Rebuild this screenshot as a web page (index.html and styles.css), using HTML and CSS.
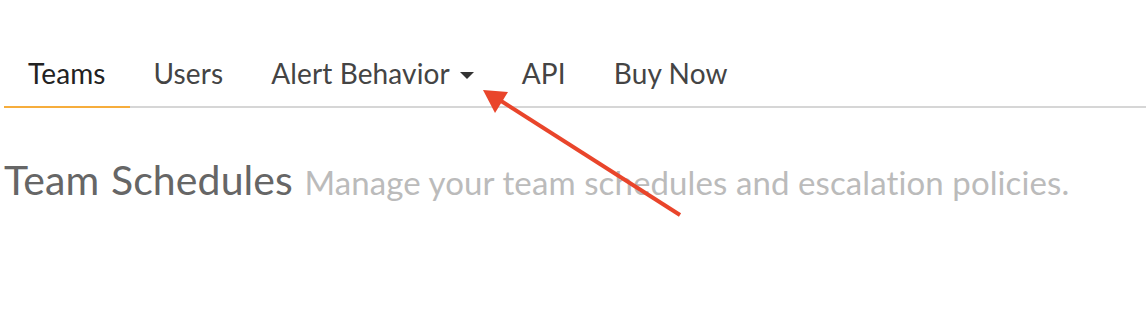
FILE: index.html
```html
<!DOCTYPE html>
<html lang="en">
<head>
  <meta charset="UTF-8" />
  <title>Team Schedules</title>
  <link rel="stylesheet" href="styles.css">
</head>
<body>
  <div class="page">
    <ul class="tabs">
      <li class="tab active">Teams</li>
      <li class="tab">Users</li>
      <li class="tab">Alert Behavior <span class="caret"></span></li>
      <li class="tab">API</li>
      <li class="tab">Buy Now</li>
    </ul>

    <h1 class="title">Team Schedules <small>Manage your team schedules and escalation policies.</small></h1>
  </div>

  <!-- annotation arrow -->
  <svg class="pointer" width="1146" height="316" viewBox="0 0 1146 316">
    <line x1="680" y1="215" x2="498" y2="99" stroke="#e9452b" stroke-width="4" />
    <polygon points="483,90 508,92 495,113" fill="#e9452b" />
  </svg>
</body>
</html>
```

FILE: styles.css
```css
* { box-sizing: border-box; margin: 0; padding: 0; }
html, body {
  background: #fff;
  font-family: Lato, "Open Sans", sans-serif;
}

.page {
  padding: 54px 0 0 4px;
}

.tabs {
  list-style: none;
  display: flex;
  border-bottom: 2px solid #d6d6d6;
}

.tab {
  padding: 0 24px 14px;
  margin-bottom: -2px;
  font-size: 28px;
  line-height: 38px;
  letter-spacing: 0.12px;
  color: #444;
  border-bottom: 2px solid transparent;
  display: flex;
  align-items: center;
}

.tab.active {
  color: #222;
  border-bottom-color: #f6ad3c;
}

.caret {
  display: inline-block;
  width: 0; height: 0;
  margin-left: 10px;
  margin-top: 5px;
  border-left: 7px solid transparent;
  border-right: 7px solid transparent;
  border-top: 7px solid #333;
}

.title {
  margin-top: 48px;
  font-size: 41px;
  font-weight: normal;
  color: #666;
  line-height: 48px;
  letter-spacing: 0.1px;
  word-spacing: 1px;
}

.title small {
  font-size: 33px;
  color: #bbb;
  letter-spacing: 0.1px;
  word-spacing: 0;
}

.pointer {
  position: absolute;
  top: 0; left: 0;
}
```
